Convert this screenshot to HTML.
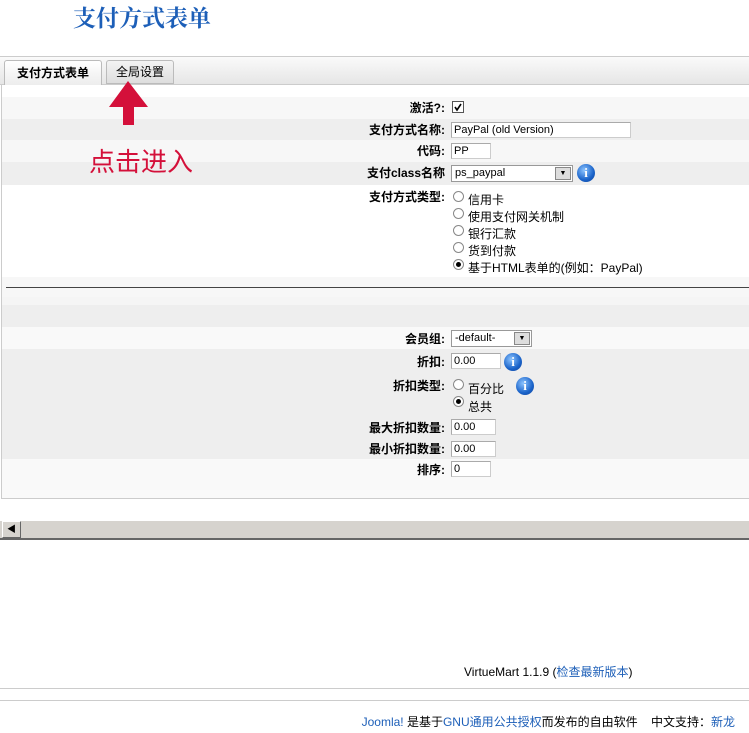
<!DOCTYPE html>
<html><head><meta charset="utf-8"><style>
*{margin:0;padding:0;box-sizing:border-box}
body{width:749px;height:733px;background:#fff;position:relative;overflow:hidden;font-family:"Liberation Sans","Noto Sans CJK SC",sans-serif;font-size:12px;color:#000}
.a{position:absolute}
.lbl{position:absolute;right:304px;font-weight:bold;font-size:12px;white-space:nowrap}
.inp{position:absolute;left:451px;height:16px;border:1px solid #7f9db9;background:#fff;font-size:11px;padding-left:2px;line-height:14px;border-color:#aaa #ccc #ccc #aaa}
.rad{position:absolute;width:11px;height:11px;border-radius:50%;border:1px solid #888;background:#fff;left:453px}
.rad.on::after{content:"";position:absolute;left:2px;top:2px;width:5px;height:5px;border-radius:50%;background:#000}
.rt{position:absolute;left:468px;font-size:12px;white-space:nowrap}
.info{position:absolute;width:18px;height:18px;border-radius:50%;background:radial-gradient(circle at 40% 35%,#8cc4ff,#1a63c9 60%,#0d3f96);color:#fff;font-weight:bold;font-size:13px;text-align:center;line-height:18px;font-family:"Liberation Serif",serif}
.sel{position:absolute;left:451px;height:17px;border:1px solid #999;background:#fff;font-size:11px;padding-left:3px;line-height:15px}
.sel b{position:absolute;right:1px;top:1px;width:16px;height:13px;background:#ddd;border:1px solid #888;font-size:7px;text-align:center;line-height:11px;font-weight:normal}
</style></head><body>
<div class="a" style="left:73px;top:0px;font-size:23px;font-weight:bold;color:#1d5fb8;font-family:'Noto Serif CJK SC',serif">支付方式表单</div>
<div class="a" style="left:0;top:56px;width:749px;height:29px;background:linear-gradient(#fafafa,#e6e6e6);border-top:1px solid #ccc;border-bottom:1px solid #ccc"></div>
<div class="a" style="left:4px;top:60px;width:98px;height:26px;background:linear-gradient(#fff,#ececec);border:1px solid #bbb;border-bottom:none;border-radius:3px 3px 0 0;font-weight:bold;font-size:12px;text-align:center;line-height:24px">支付方式表单</div>
<div class="a" style="left:106px;top:60px;width:68px;height:24px;background:linear-gradient(#f4f4f4,#dedede);border:1px solid #bbb;border-radius:3px 3px 0 0;font-size:12px;text-align:center;line-height:22px">全局设置</div>
<div class="a" style="left:1px;top:85px;width:748px;height:414px;border-left:1px solid #ccc;border-bottom:1px solid #ccc;background:#fff"></div>
<div class="a" style="left:2px;top:97px;width:747px;height:22px;background:#f7f7f7"></div>
<div class="a" style="left:2px;top:119px;width:747px;height:21px;background:#eee"></div>
<div class="a" style="left:2px;top:140px;width:747px;height:22px;background:#f7f7f7"></div>
<div class="a" style="left:2px;top:162px;width:747px;height:23px;background:#eee"></div>
<div class="a" style="left:2px;top:185px;width:747px;height:92px;background:#fff"></div>
<div class="a" style="left:2px;top:277px;width:747px;height:20px;background:#f7f7f7"></div>
<div class="a" style="left:6px;top:287px;width:743px;height:1px;background:#444"></div>
<div class="a" style="left:2px;top:297px;width:747px;height:8px;background:#f5f5f5"></div>
<div class="a" style="left:2px;top:305px;width:747px;height:22px;background:#eee"></div>
<div class="a" style="left:2px;top:327px;width:747px;height:22px;background:#f9f9f9"></div>
<div class="a" style="left:2px;top:349px;width:747px;height:110px;background:#eee"></div>
<div class="a" style="left:2px;top:459px;width:747px;height:39px;background:#f9f9f9"></div>

<svg class="a" style="left:108px;top:80px" width="42" height="46"><polygon points="20,1 40,27 26,27 26,45 15,45 15,27 1,27" fill="#d4103a"/></svg>
<div class="a" style="left:89px;top:142px;font-size:26px;color:#d4103a">点击进入</div>

<div class="lbl" style="top:99px">激活?:</div>
<div class="a" style="left:452px;top:101px;width:12px;height:12px;border:1px solid #555;background:#fff"><svg width="10" height="10" style="position:absolute;left:0;top:0"><path d="M2 5 L4 8 L8 2" stroke="#000" stroke-width="1.6" fill="none"/></svg></div>
<div class="lbl" style="top:121px">支付方式名称:</div>
<div class="inp" style="top:122px;width:180px">PayPal (old Version)</div>
<div class="lbl" style="top:142px">代码:</div>
<div class="inp" style="top:143px;width:40px">PP</div>
<div class="lbl" style="top:164px">支付class名称</div>
<div class="sel" style="top:165px;width:122px">ps_paypal<b>▼</b></div>
<div class="info" style="left:577px;top:164px">i</div>
<div class="lbl" style="top:188px">支付方式类型:</div>
<div class="rad" style="top:191px"></div><div class="rt" style="top:191px">信用卡</div>
<div class="rad" style="top:208px"></div><div class="rt" style="top:208px">使用支付网关机制</div>
<div class="rad" style="top:225px"></div><div class="rt" style="top:225px">银行汇款</div>
<div class="rad" style="top:242px"></div><div class="rt" style="top:242px">货到付款</div>
<div class="rad on" style="top:259px"></div><div class="rt" style="top:259px">基于HTML表单的(例如：PayPal)</div>

<div class="lbl" style="top:330px">会员组:</div>
<div class="sel" style="top:330px;width:81px">-default-<b>▼</b></div>
<div class="lbl" style="top:353px">折扣:</div>
<div class="inp" style="top:353px;width:50px">0.00</div>
<div class="info" style="left:504px;top:353px">i</div>
<div class="lbl" style="top:377px">折扣类型:</div>
<div class="rad" style="top:379px"></div><div class="rt" style="top:380px">百分比</div>
<div class="info" style="left:516px;top:377px">i</div>
<div class="rad on" style="top:396px"></div><div class="rt" style="top:398px">总共</div>
<div class="lbl" style="top:419px">最大折扣数量:</div>
<div class="inp" style="top:419px;width:45px">0.00</div>
<div class="lbl" style="top:440px">最小折扣数量:</div>
<div class="inp" style="top:441px;width:45px">0.00</div>
<div class="lbl" style="top:461px">排序:</div>
<div class="inp" style="top:461px;width:40px">0</div>

<div class="a" style="left:0;top:520px;width:749px;height:20px;background:#d6d3ce;border-top:1px solid #fff;border-bottom:2px solid #666"></div>
<div class="a" style="left:2px;top:521px;width:19px;height:17px;background:#d6d3ce;border:1px solid #fff;border-right-color:#666;border-bottom-color:#666;font-size:9px;text-align:center;line-height:15px">◀</div>

<div class="a" style="left:464px;top:663px;font-size:12px">VirtueMart 1.1.9 (<span style="color:#1d5fb8">检查最新版本</span>)</div>
<div class="a" style="left:0;top:688px;width:749px;height:1px;background:#ccc"></div>
<div class="a" style="left:0;top:700px;width:749px;height:1px;background:#ccc"></div>
<div class="a" style="right:14px;top:713px;font-size:12px;white-space:nowrap"><span style="color:#1d5fb8">Joomla!</span> 是基于<span style="color:#1d5fb8">GNU通用公共授权</span>而发布的自由软件&nbsp;&nbsp;&nbsp;&nbsp;中文支持：<span style="color:#1d5fb8">新龙</span></div>
</body></html>
